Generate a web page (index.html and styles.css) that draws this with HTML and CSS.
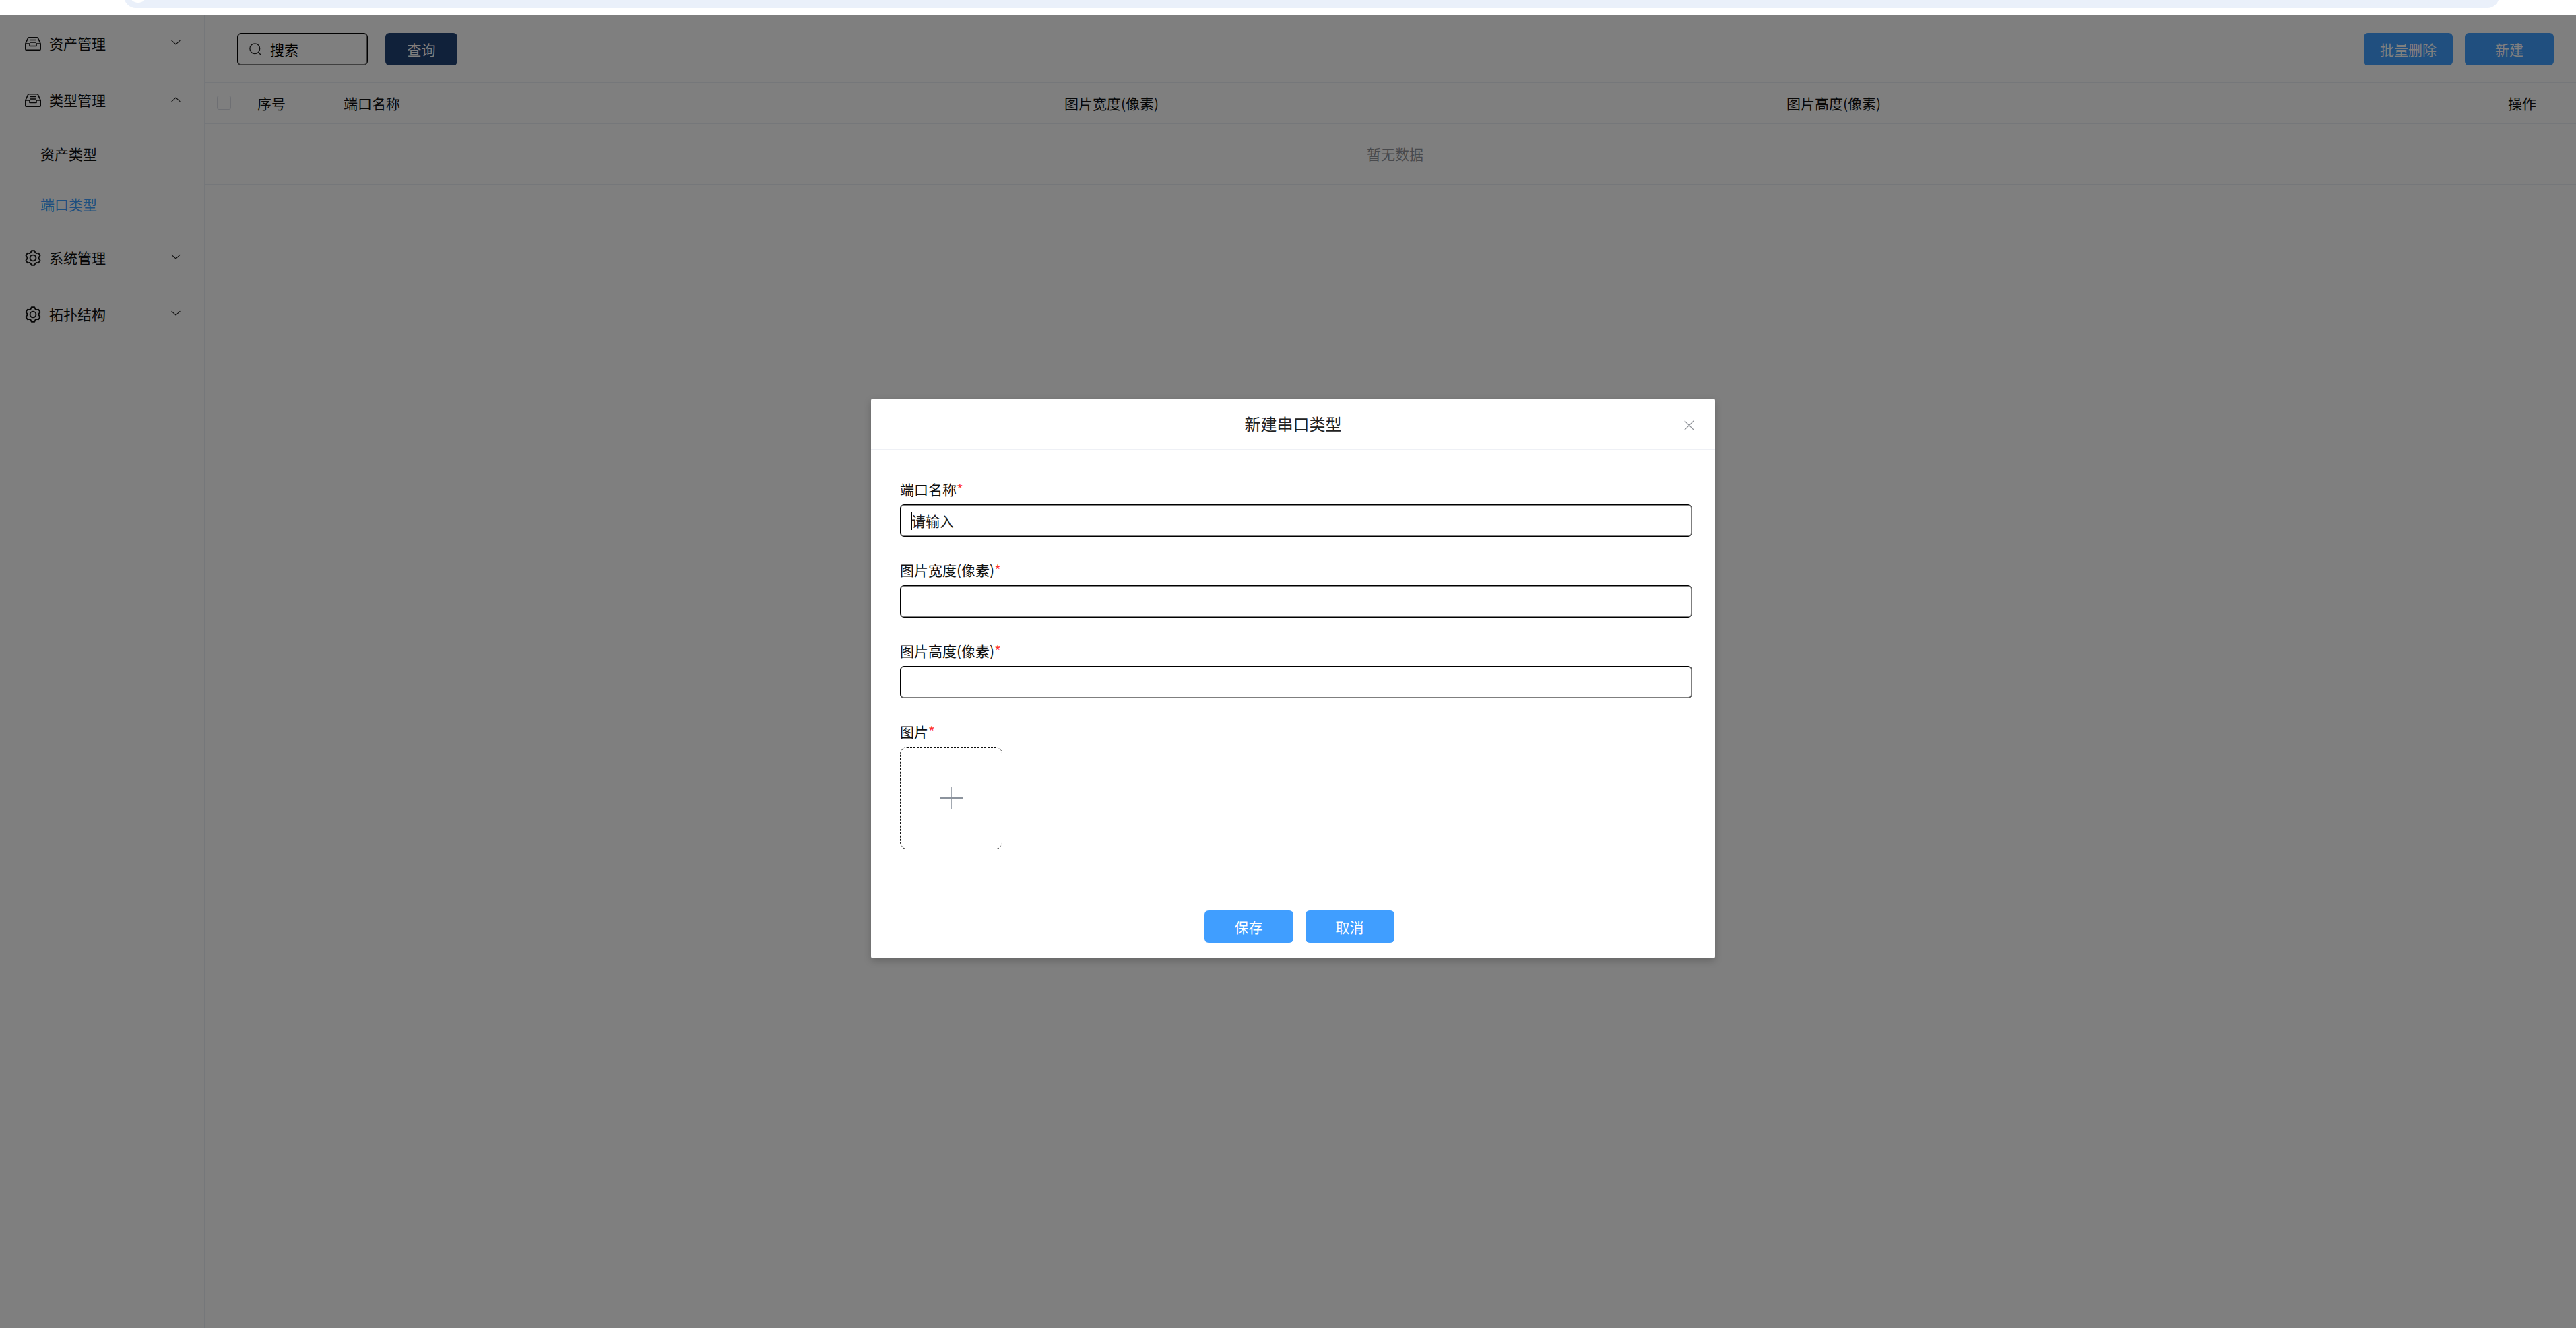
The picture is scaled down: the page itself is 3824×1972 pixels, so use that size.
FILE: index.html
```html
<!DOCTYPE html>
<html lang="zh-CN">
<head>
<meta charset="utf-8">
<title>端口类型</title>
<link rel="stylesheet" href="styles.css">
</head>
<body>
<svg class="defs" width="0" height="0" aria-hidden="true">
  <symbol id="i-inbox" viewBox="0 0 24 20">
    <path d="M0.8 10 L4.5 1.8 Q5 0.8 6 0.8 H18 Q19 0.8 19.5 1.8 L23.2 10 V18 Q23.2 19.2 22 19.2 H2 Q0.8 19.2 0.8 18 Z M0.8 10 H7 V13.5 H17 V10 H23.2 M7.5 4.5 H16.5 M7 8 H17" fill="none" stroke="currentColor" stroke-width="1.6" stroke-linejoin="round"/>
  </symbol>
  <symbol id="i-gear" viewBox="0 0 24 24">
    <path d="M15.3 3.84 L14.29 1.24 L9.71 1.24 L8.7 3.84 L6.58 5.07 L3.83 4.64 L1.54 8.6 L3.29 10.78 L3.29 13.22 L1.54 15.4 L3.83 19.36 L6.58 18.93 L8.7 20.16 L9.71 22.76 L14.29 22.76 L15.3 20.16 L17.42 18.93 L20.17 19.36 L22.46 15.4 L20.71 13.22 L20.71 10.78 L22.46 8.6 L20.17 4.64 L17.42 5.07 Z" fill="none" stroke="currentColor" stroke-width="1.9" stroke-linejoin="round"/>
    <circle cx="12" cy="12" r="4.4" fill="none" stroke="currentColor" stroke-width="1.9"/>
  </symbol>
  <symbol id="i-down" viewBox="0 0 14 9">
    <path d="M0.6 1.2 L7 7 L13.4 1.2" fill="none" stroke="currentColor" stroke-width="1.1"/>
  </symbol>
  <symbol id="i-up" viewBox="0 0 14 9">
    <path d="M0.6 7.8 L7 2 L13.4 7.8" fill="none" stroke="currentColor" stroke-width="1.1"/>
  </symbol>
</svg>

<header class="browser-bar">
  <div class="address-pill"><span class="address-dot"></span></div>
</header>

<div class="app">
  <nav class="sidebar">
    <div class="menu-item">
      <svg class="menu-icon menu-icon-inbox"><use href="#i-inbox"/></svg>
      <span class="menu-label">资产管理</span>
      <svg class="chevron"><use href="#i-down"/></svg>
    </div>
    <div class="menu-item">
      <svg class="menu-icon menu-icon-inbox"><use href="#i-inbox"/></svg>
      <span class="menu-label">类型管理</span>
      <svg class="chevron"><use href="#i-up"/></svg>
    </div>
    <div class="submenu-item">资产类型</div>
    <div class="submenu-item submenu-active">端口类型</div>
    <div class="menu-item">
      <svg class="menu-icon"><use href="#i-gear"/></svg>
      <span class="menu-label">系统管理</span>
      <svg class="chevron"><use href="#i-down"/></svg>
    </div>
    <div class="menu-item">
      <svg class="menu-icon"><use href="#i-gear"/></svg>
      <span class="menu-label">拓扑结构</span>
      <svg class="chevron"><use href="#i-down"/></svg>
    </div>
  </nav>

  <main class="content">
    <div class="toolbar">
      <div class="search">
        <svg class="search-icon" viewBox="0 0 18 18"><circle cx="8.3" cy="8.3" r="7.4" fill="none" stroke="currentColor" stroke-width="1.3"/><path d="M13.8 13.8 L17.2 17.2" fill="none" stroke="currentColor" stroke-width="1.3"/></svg>
        <span>搜索</span>
      </div>
      <button class="btn btn-navy">查询</button>
      <div class="toolbar-right">
        <button class="btn btn-blue">批量删除</button>
        <button class="btn btn-blue">新建</button>
      </div>
    </div>
    <div class="table-row table-head">
      <div class="cell-check"><span class="checkbox"></span></div>
      <div>序号</div>
      <div>端口名称</div>
      <div class="cell-center">图片宽度(像素)</div>
      <div class="cell-center">图片高度(像素)</div>
      <div class="cell-right">操作</div>
    </div>
    <div class="table-empty">暂无数据</div>
  </main>
</div>

<div class="mask">
  <section class="dialog">
    <header class="dialog-header">
      <h2 class="dialog-title">新建串口类型</h2>
      <svg class="dialog-close" viewBox="0 0 16 16"><path d="M0.8 0.8 L15.2 15.2 M15.2 0.8 L0.8 15.2" fill="none" stroke="currentColor" stroke-width="1.2"/></svg>
    </header>
    <div class="dialog-body">
      <div class="form-item">
        <label class="form-label">端口名称<span class="req">*</span></label>
        <div class="input"><span class="caret"></span><span>请输入</span></div>
      </div>
      <div class="form-item">
        <label class="form-label">图片宽度(像素)<span class="req">*</span></label>
        <div class="input"></div>
      </div>
      <div class="form-item">
        <label class="form-label">图片高度(像素)<span class="req">*</span></label>
        <div class="input"></div>
      </div>
      <div class="form-item form-item-last">
        <label class="form-label">图片<span class="req">*</span></label>
        <div class="upload">
          <svg class="upload-plus" viewBox="0 0 34 34"><path d="M17 0 V34" stroke="#8c939d" stroke-width="1.6"/><path d="M0 17 H34" stroke="#8c939d" stroke-width="2.4"/></svg>
        </div>
      </div>
    </div>
    <footer class="dialog-footer">
      <button class="btn btn-primary">保存</button>
      <button class="btn btn-primary">取消</button>
    </footer>
  </section>
</div>
</body>
</html>
```
FILE: styles.css
```css
* { box-sizing: border-box; }
html, body {
  margin: 0;
  padding: 0;
  height: 1972px;
  overflow: hidden;
  background: #fff;
  font-family: "Noto Sans CJK SC", "Liberation Sans", sans-serif;
  font-size: 21px;
  color: #000;
}
.defs { position: absolute; }

/* browser strip above the app */
.browser-bar {
  height: 23px;
  background: #fff;
  border-bottom: 1px solid #ddd;
  padding: 0 114px 0 184px;
  overflow: hidden;
}
.address-pill {
  position: relative;
  height: 36px;
  margin-top: -24px;
  background: #eaf0fa;
  border-radius: 22px;
  overflow: hidden;
}
.address-dot {
  position: absolute;
  left: 8px;
  bottom: 8px;
  width: 26px;
  height: 26px;
  border-radius: 50%;
  background: #fff;
}

.app {
  display: flex;
  height: 1949px;
}
.sidebar {
  width: 304px;
  flex: none;
  border-right: 1px solid #ebeef5;
  background: #fff;
}
.menu-item {
  display: flex;
  align-items: center;
  height: 84px;
  padding-left: 37px;
  color: #111;
}
.menu-icon {
  width: 24px;
  height: 24px;
  flex: none;
  color: #111;
}
.menu-icon-inbox { height: 20px; }
.menu-label {
  margin-left: 12px;
  line-height: 28px;
  margin-bottom: 2px;
}
.chevron {
  width: 14px;
  height: 9px;
  margin-left: 97px;
  margin-top: -4px;
  color: #222;
}
.submenu-item {
  height: 75px;
  line-height: 74px;
  padding-left: 60px;
  color: #111;
}
.submenu-active { color: #409eff; }

.content {
  flex: 1;
  min-width: 0;
}
.toolbar {
  display: flex;
  align-items: flex-start;
  height: 100px;
  padding: 26px 33px 0 48px;
  border-bottom: 1px solid #ebeef5;
}
.search {
  display: flex;
  align-items: center;
  width: 194px;
  height: 48px;
  padding-left: 17px;
  border: 1px solid #000;
  box-shadow: inset 0 0 0 1px rgba(0, 0, 0, 0.5);
  border-radius: 6px;
}
.search-icon {
  width: 18px;
  height: 18px;
  margin-right: 13px;
  color: #222;
  flex: none;
}
.btn {
  height: 48px;
  padding: 0;
  border: 0;
  border-radius: 6px;
  color: #fff;
  font: inherit;
  cursor: pointer;
}
.btn-navy {
  width: 107px;
  margin-left: 26px;
  background: #204274;
}
.btn-blue {
  width: 132px;
  background: #409eff;
}
.toolbar-right {
  display: flex;
  gap: 18px;
  margin-left: auto;
}

.table-row {
  display: grid;
  grid-template-columns: 78px 128px 604px 1072px 1072px 1fr;
  align-items: center;
  height: 61px;
  padding-bottom: 1px;
  border-bottom: 1px solid #ebeef5;
}
.table-head { color: #111; }
.cell-check { padding-left: 18px; display: flex; }
.checkbox {
  width: 21px;
  height: 21px;
  border: 1px solid #dcdfe6;
  border-radius: 3px;
  background: #fff;
}
.cell-center { text-align: center; }
.cell-right { text-align: right; padding-right: 59px; }
.table-empty {
  height: 90px;
  line-height: 89px;
  padding-left: 14px;
  text-align: center;
  color: #909399;
  border-bottom: 1px solid #ebeef5;
}

/* modal */
.mask {
  position: absolute;
  left: 0;
  right: 0;
  top: 23px;
  bottom: 0;
  background: rgba(0, 0, 0, 0.5);
}
.dialog {
  width: 1253px;
  height: 831px;
  margin: 569px 0 0 1293px;
  background: #fff;
  border-radius: 3px;
  box-shadow: 0 4px 12px rgba(0, 0, 0, 0.2);
}
.dialog-header {
  position: relative;
  height: 76px;
  border-bottom: 1px solid #eef0f5;
  display: flex;
  justify-content: center;
  align-items: center;
}
.dialog-title {
  margin: 0 0 2px;
  font-size: 24px;
  font-weight: 400;
  color: #222;
}
.dialog-close {
  position: absolute;
  right: 31px;
  top: 32px;
  width: 15px;
  height: 15px;
  color: #909399;
}
.dialog-body {
  height: 660px;
  padding: 44px 34px 0 43px;
  border-bottom: 1px solid #eef0f5;
}
.form-item { margin-bottom: 35px; }
.form-item-last { margin-bottom: 0; }
.form-label {
  display: block;
  height: 30px;
  line-height: 28px;
  margin-bottom: 7px;
  color: #111;
}
.req { color: #f33; }
.input {
  position: relative;
  display: flex;
  align-items: center;
  height: 48px;
  padding-left: 16px;
  border: 1px solid #000;
  box-shadow: inset 0 0 0 1px rgba(0, 0, 0, 0.5);
  border-radius: 6px;
  color: #222;
}
.caret {
  position: absolute;
  left: 16px;
  top: 10px;
  width: 1px;
  height: 27px;
  background: #000;
}
.upload {
  display: flex;
  align-items: center;
  justify-content: center;
  width: 152px;
  height: 152px;
  border: 1px dashed #111;
  border-radius: 10px;
}
.upload-plus {
  width: 34px;
  height: 34px;
}
.dialog-footer {
  display: flex;
  justify-content: center;
  gap: 18px;
  padding-top: 24px;
  padding-left: 18px;
}
.btn-primary {
  width: 132px;
  background: #409eff;
}
```
